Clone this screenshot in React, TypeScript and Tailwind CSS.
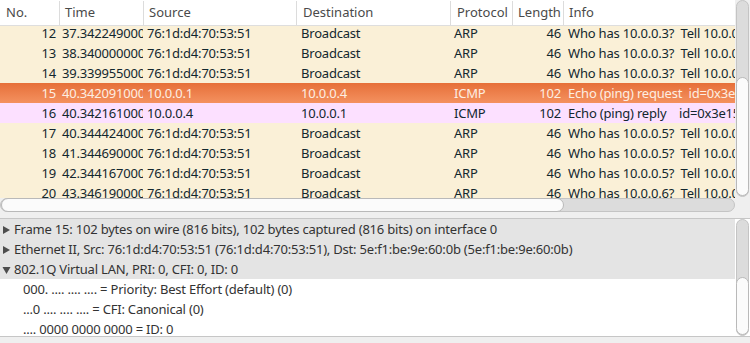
import React from "react"

type Packet = {
  no: number
  time: string
  src: string
  dst: string
  proto: string
  len: number
  info: string
  kind: "arp" | "icmp" | "selected"
}

const packets: Packet[] = [
  { no: 12, time: "37.342249000", src: "76:1d:d4:70:53:51", dst: "Broadcast", proto: "ARP", len: 46, info: "Who has 10.0.0.3?  Tell 10.0.0.1", kind: "arp" },
  { no: 13, time: "38.340000000", src: "76:1d:d4:70:53:51", dst: "Broadcast", proto: "ARP", len: 46, info: "Who has 10.0.0.3?  Tell 10.0.0.1", kind: "arp" },
  { no: 14, time: "39.339955000", src: "76:1d:d4:70:53:51", dst: "Broadcast", proto: "ARP", len: 46, info: "Who has 10.0.0.3?  Tell 10.0.0.1", kind: "arp" },
  { no: 15, time: "40.342091000", src: "10.0.0.1", dst: "10.0.0.4", proto: "ICMP", len: 102, info: "Echo (ping) request  id=0x3e15, seq=1/256, ttl=64", kind: "selected" },
  { no: 16, time: "40.342161000", src: "10.0.0.4", dst: "10.0.0.1", proto: "ICMP", len: 102, info: "Echo (ping) reply    id=0x3e15, seq=1/256, ttl=64", kind: "icmp" },
  { no: 17, time: "40.344424000", src: "76:1d:d4:70:53:51", dst: "Broadcast", proto: "ARP", len: 46, info: "Who has 10.0.0.5?  Tell 10.0.0.1", kind: "arp" },
  { no: 18, time: "41.344690000", src: "76:1d:d4:70:53:51", dst: "Broadcast", proto: "ARP", len: 46, info: "Who has 10.0.0.5?  Tell 10.0.0.1", kind: "arp" },
  { no: 19, time: "42.344167000", src: "76:1d:d4:70:53:51", dst: "Broadcast", proto: "ARP", len: 46, info: "Who has 10.0.0.5?  Tell 10.0.0.1", kind: "arp" },
  { no: 20, time: "43.346190000", src: "76:1d:d4:70:53:51", dst: "Broadcast", proto: "ARP", len: 46, info: "Who has 10.0.0.6?  Tell 10.0.0.1", kind: "arp" },
]

const rowClass = {
  arp: "bg-[#faf0d7] text-[#12272e]",
  icmp: "bg-[#fce0ff] text-[#12272e]",
  selected: "bg-gradient-to-b from-[#e66f38] to-[#f4915f] text-[#fdeee2]",
}

function Triangle({ open }: { open?: boolean }) {
  return (
    <svg width="9" height="10" viewBox="0 0 9 10" className="shrink-0">
      {open ? <polygon points="0.5,2 8.5,2 4.5,9" fill="#4d4d4d" /> : <polygon points="1,1 8,5 1,9" fill="#4d4d4d" />}
    </svg>
  )
}

function VScroll({ thumbTop, thumbHeight, trackHeight }: { thumbTop: number; thumbHeight: number; trackHeight: number }) {
  return (
    <div className="w-[15px] flex justify-center" style={{ height: trackHeight }}>
      <div className="w-[13px] h-full rounded-full bg-[#dcdcdc] border border-[#c4c4c4] flex flex-col">
        <div style={{ height: thumbTop }} />
        <div className="-mx-px rounded-full bg-[#fbfbfb] border border-[#b9b9b9]" style={{ height: thumbHeight }} />
      </div>
    </div>
  )
}

export default function App() {
  return (
    <div className="w-[750px] h-[343px] bg-[#efefef] flex flex-col overflow-hidden text-[13px] tracking-[-0.2px] font-['Noto_Sans',sans-serif]">
      {/* packet list */}
      <div className="h-[212px] flex">
        <div className="w-[735px] flex flex-col">
          <div className="h-[26px] pt-px bg-white border-b border-[#dedede] flex text-[#4a4a4a] whitespace-nowrap tracking-normal">
            <div className="w-[59px] pl-[6px] flex items-center overflow-hidden">No.</div>
            <div className="w-[84px] pl-[5px] border-l border-[#dcdcdc] flex items-center overflow-hidden">Time</div>
            <div className="w-[153px] pl-[5px] border-l border-[#dcdcdc] flex items-center overflow-hidden">Source</div>
            <div className="w-[154px] pl-[6px] border-l border-[#dcdcdc] flex items-center overflow-hidden">Destination</div>
            <div className="w-[62px] pl-[6px] border-l border-[#dcdcdc] flex items-center overflow-hidden">Protocol</div>
            <div className="w-[51px] pl-[5px] border-l border-[#dcdcdc] flex items-center overflow-hidden">Length</div>
            <div className="flex-1 pl-[5px] border-l border-[#dcdcdc] flex items-center overflow-hidden">Info</div>
          </div>
          <div className="h-[172px] overflow-hidden bg-white">
            <div className="-mt-[3px]">
              {packets.map((p) => (
                <div key={p.no} className={`h-[20px] pt-[2px] flex items-center whitespace-nowrap ${rowClass[p.kind]}`}>
                  <div className="w-[59px] pr-[3px] text-right overflow-hidden">{p.no}</div>
                  <div className="w-[84px] pl-[3px] overflow-hidden">{p.time}</div>
                  <div className="w-[153px] pl-[4px] overflow-hidden">{p.src}</div>
                  <div className="w-[154px] pl-[5px] overflow-hidden">{p.dst}</div>
                  <div className="w-[62px] pl-[4px] overflow-hidden">{p.proto}</div>
                  <div className="w-[51px] pr-[2px] text-right overflow-hidden">{p.len}</div>
                  <div className="flex-1 pl-[5px] overflow-hidden whitespace-pre">{p.info}</div>
                </div>
              ))}
            </div>
          </div>
          <div className="h-[14px] flex">
            <div className="flex-1 h-[14px] rounded-full bg-[#dcdcdc] border border-[#c4c4c4] flex">
              <div className="w-[563px] -my-px rounded-full bg-[#fbfbfb] border border-[#b9b9b9]" />
            </div>
          </div>
        </div>
        <div className="w-[15px] flex flex-col">
          <VScroll thumbTop={76} thumbHeight={120} trackHeight={197} />
        </div>
      </div>

      <div className="h-[6px]" />

      {/* packet details */}
      <div className="h-[119px] flex bg-white border-y border-[#c6c6c6] text-[#333333]">
        <div className="flex-1 overflow-hidden whitespace-nowrap">
          <div className="h-[20px] pt-[2px] bg-[#e4e4e4] flex items-center gap-[3px] pl-[2px]">
            <Triangle />
            <span>Frame 15: 102 bytes on wire (816 bits), 102 bytes captured (816 bits) on interface 0</span>
          </div>
          <div className="h-[20px] pt-[2px] bg-[#e4e4e4] flex items-center gap-[3px] pl-[2px]">
            <Triangle />
            <span>Ethernet II, Src: 76:1d:d4:70:53:51 (76:1d:d4:70:53:51), Dst: 5e:f1:be:9e:60:0b (5e:f1:be:9e:60:0b)</span>
          </div>
          <div className="h-[20px] pt-[2px] bg-[#e4e4e4] flex items-center gap-[3px] pl-[2px]">
            <Triangle open />
            <span>802.1Q Virtual LAN, PRI: 0, CFI: 0, ID: 0</span>
          </div>
          <div className="h-[20px] pt-[2px] flex items-center pl-[23px]">000. .... .... .... = Priority: Best Effort (default) (0)</div>
          <div className="h-[20px] pt-[2px] flex items-center pl-[23px]">...0 .... .... .... = CFI: Canonical (0)</div>
          <div className="h-[20px] pt-[2px] flex items-center pl-[23px]">.... 0000 0000 0000 = ID: 0</div>
        </div>
        <div className="w-[15px] bg-white">
          <VScroll thumbTop={73} thumbHeight={74} trackHeight={117} />
        </div>
      </div>
    </div>
  )
}
